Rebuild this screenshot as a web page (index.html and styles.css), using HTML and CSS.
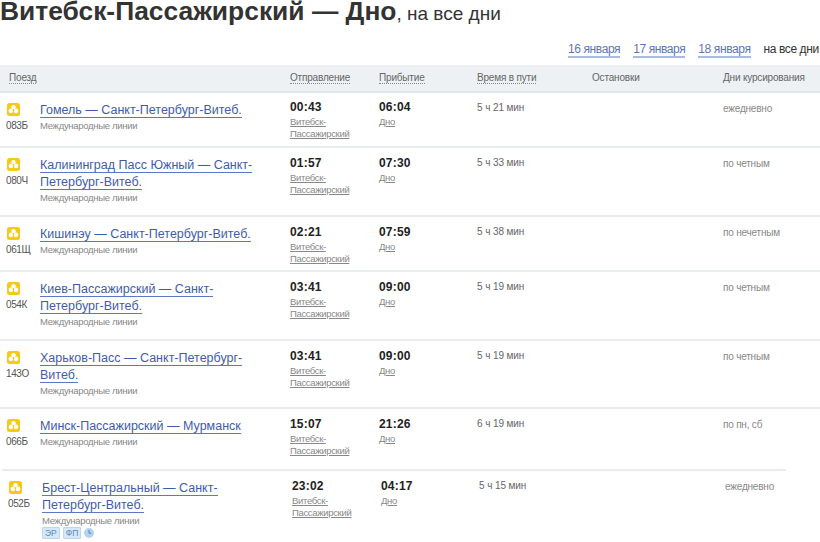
FILE: index.html
```html
<!DOCTYPE html>
<html lang="ru">
<head>
<meta charset="utf-8">
<title>Витебск-Пассажирский — Дно</title>
<link rel="stylesheet" href="styles.css">
</head>
<body>
<svg class="defs" aria-hidden="true"><symbol id="train" viewBox="0 0 13 13"><rect width="13" height="13" rx="2.500" fill="#f5c916"/><circle cx="6.500" cy="4.300" r="2.200" fill="#fff"/><circle cx="3.900" cy="7.900" r="2.300" fill="#fff"/><circle cx="9.100" cy="7.900" r="2.300" fill="#fff"/><circle cx="6.500" cy="7.100" r=".9" fill="#f5c916"/></symbol></svg>
<div class="page">
  <h1 class="title"><b>Витебск-Пассажирский — Дно</b><span class="title-sub">, на все дни</span></h1>
  <nav class="dates">
    <a class="date-link">16 января</a>
    <a class="date-link">17 января</a>
    <a class="date-link">18 января</a>
    <span class="date-current">на все дни</span>
  </nav>
  <div class="row head">
    <div><span class="dotted">Поезд</span></div>
    <div></div>
    <div><span class="dotted">Отправление</span></div>
    <div><span class="dotted">Прибытие</span></div>
    <div><span class="dotted">Время в пути</span></div>
    <div>Остановки</div>
    <div>Дни курсирования</div>
  </div>

  <div class="row train first">
    <div class="num"><svg class="ico"><use href="#train"/></svg><span>083Б</span></div>
    <div class="name"><a class="link">Гомель — Санкт-Петербург-Витеб.</a><p class="kind">Международные линии</p></div>
    <div class="time"><b>00:43</b><a class="st">Витебск-<br>Пассажирский</a></div>
    <div class="time"><b>06:04</b><a class="st">Дно</a></div>
    <div class="dur">5 ч 21 мин</div>
    <div></div>
    <div class="days">ежедневно</div>
  </div>

  <div class="row train">
    <div class="num"><svg class="ico"><use href="#train"/></svg><span>080Ч</span></div>
    <div class="name"><a class="link">Калининград Пасс Южный — Санкт-Петербург-Витеб.</a><p class="kind">Международные линии</p></div>
    <div class="time"><b>01:57</b><a class="st">Витебск-<br>Пассажирский</a></div>
    <div class="time"><b>07:30</b><a class="st">Дно</a></div>
    <div class="dur">5 ч 33 мин</div>
    <div></div>
    <div class="days">по четным</div>
  </div>

  <div class="row train">
    <div class="num"><svg class="ico"><use href="#train"/></svg><span>061Щ</span></div>
    <div class="name"><a class="link">Кишинэу — Санкт-Петербург-Витеб.</a><p class="kind">Международные линии</p></div>
    <div class="time"><b>02:21</b><a class="st">Витебск-<br>Пассажирский</a></div>
    <div class="time"><b>07:59</b><a class="st">Дно</a></div>
    <div class="dur">5 ч 38 мин</div>
    <div></div>
    <div class="days">по нечетным</div>
  </div>

  <div class="row train">
    <div class="num"><svg class="ico"><use href="#train"/></svg><span>054К</span></div>
    <div class="name"><a class="link">Киев-Пассажирский — Санкт-Петербург-Витеб.</a><p class="kind">Международные линии</p></div>
    <div class="time"><b>03:41</b><a class="st">Витебск-<br>Пассажирский</a></div>
    <div class="time"><b>09:00</b><a class="st">Дно</a></div>
    <div class="dur">5 ч 19 мин</div>
    <div></div>
    <div class="days">по четным</div>
  </div>

  <div class="row train">
    <div class="num"><svg class="ico"><use href="#train"/></svg><span>143О</span></div>
    <div class="name"><a class="link">Харьков-Пасс — Санкт-Петербург-Витеб.</a><p class="kind">Международные линии</p></div>
    <div class="time"><b>03:41</b><a class="st">Витебск-<br>Пассажирский</a></div>
    <div class="time"><b>09:00</b><a class="st">Дно</a></div>
    <div class="dur">5 ч 19 мин</div>
    <div></div>
    <div class="days">по четным</div>
  </div>

  <div class="row train tall">
    <div class="num"><svg class="ico"><use href="#train"/></svg><span>066Б</span></div>
    <div class="name"><a class="link">Минск-Пассажирский — Мурманск</a><p class="kind">Международные линии</p></div>
    <div class="time"><b>15:07</b><a class="st">Витебск-<br>Пассажирский</a></div>
    <div class="time"><b>21:26</b><a class="st">Дно</a></div>
    <div class="dur">6 ч 19 мин</div>
    <div></div>
    <div class="days">по пн, сб</div>
  </div>

  <div class="row train last">
    <div class="num"><svg class="ico"><use href="#train"/></svg><span>052Б</span></div>
    <div class="name"><a class="link">Брест-Центральный — Санкт-Петербург-Витеб.</a><p class="kind">Международные линии</p>
      <div class="tags"><span class="tag">ЭР</span><span class="tag">ФП</span><svg class="clock" viewBox="0 0 10 10"><circle cx="5" cy="5" r="5" fill="#b5d3ee"/><path d="M5 2v3.200h2.300" fill="none" stroke="#4f86c0" stroke-width="1"/></svg></div>
    </div>
    <div class="time"><b>23:02</b><a class="st">Витебск-<br>Пассажирский</a></div>
    <div class="time"><b>04:17</b><a class="st">Дно</a></div>
    <div class="dur">5 ч 15 мин</div>
    <div></div>
    <div class="days">ежедневно</div>
  </div>
</div>
</body>
</html>
```
FILE: styles.css
```css
html, body { margin: 0; padding: 0; overflow: hidden; background: #fff; }
body { height: 542px; font-family: "Liberation Sans", Arial, sans-serif; color: #333; }
.defs { display: none; }
.page { width: 820px; }
.title { margin: 0; height: 42px; font-size: 26.4px; line-height: 22px; font-weight: normal; color: #333; white-space: nowrap; }
.title b { font-weight: bold; }
.title-sub { font-size: 19px; }
.dates { display: flex; gap: 13px; height: 23px; font-size: 12px; letter-spacing: -.4px; line-height: 14px; white-space: nowrap; padding-left: 568px; align-items: flex-start; }
.date-link { color: #5b76b8; border-bottom: 2px solid #a9bbe0; }
.date-current { color: #333; }
.row { display: grid; grid-template-columns: 40px 250px 89px 98px 115px 131px 97px; }
.head { background: #edf1f4; border-bottom: 2px solid #dfe5e9; height: 26px; font-size: 10px; letter-spacing: -.18px; line-height: 26px; color: #666; }
.head > div:first-child { padding-left: 9px; }
.dotted { border-bottom: 1px dotted #888; }
.train { border-top: 2px solid #e8ebf0; padding-top: 8px; box-sizing: border-box; min-height: 55px; }
.first { border-top: 0; min-height: 53.3px; }
.tall { min-height: 62px; }
.last { margin-left: 2px; width: 784px; }
.num { display: flex; flex-direction: column; align-items: flex-start; padding: 2px 0 0 7px; font-size: 10px; letter-spacing: -.4px; line-height: 12px; color: #555; }
.num span { margin-left: -1px; margin-top: 4px; }
.ico { display: block; width: 13px; height: 13px; }
.name { font-size: 12.5px; line-height: 17px; padding: 1px 35px 10.7px 0; }
.link { color: #3f5ca8; border-bottom: 1px solid #5c78c4; }
.kind { margin: 1px 0 0; font-size: 9.5px; letter-spacing: -.3px; line-height: 12px; color: #888; }
.tags { display: flex; align-items: center; gap: 3px; height: 12px; }
.tag { font-size: 8.5px; line-height: 10px; height: 10px; padding: 0 2px; background: #d6e8f7; border: 1px solid #bcd8ef; color: #5c89b5; border-radius: 1px; }
.clock { width: 10px; height: 10px; }
.time b { display: block; font-size: 12px; line-height: 15px; color: #222; letter-spacing: .2px; }
.first .time { margin-top: -1px; }
.st { display: block; margin-top: 1px; font-size: 9.5px; letter-spacing: -.33px; line-height: 12px; color: #888; text-decoration: underline; }
.dur { margin-top: -1px; font-size: 10px; letter-spacing: -.1px; line-height: 15px; color: #666; }
.days { font-size: 10px; letter-spacing: -.2px; line-height: 16px; color: #888; }
```
